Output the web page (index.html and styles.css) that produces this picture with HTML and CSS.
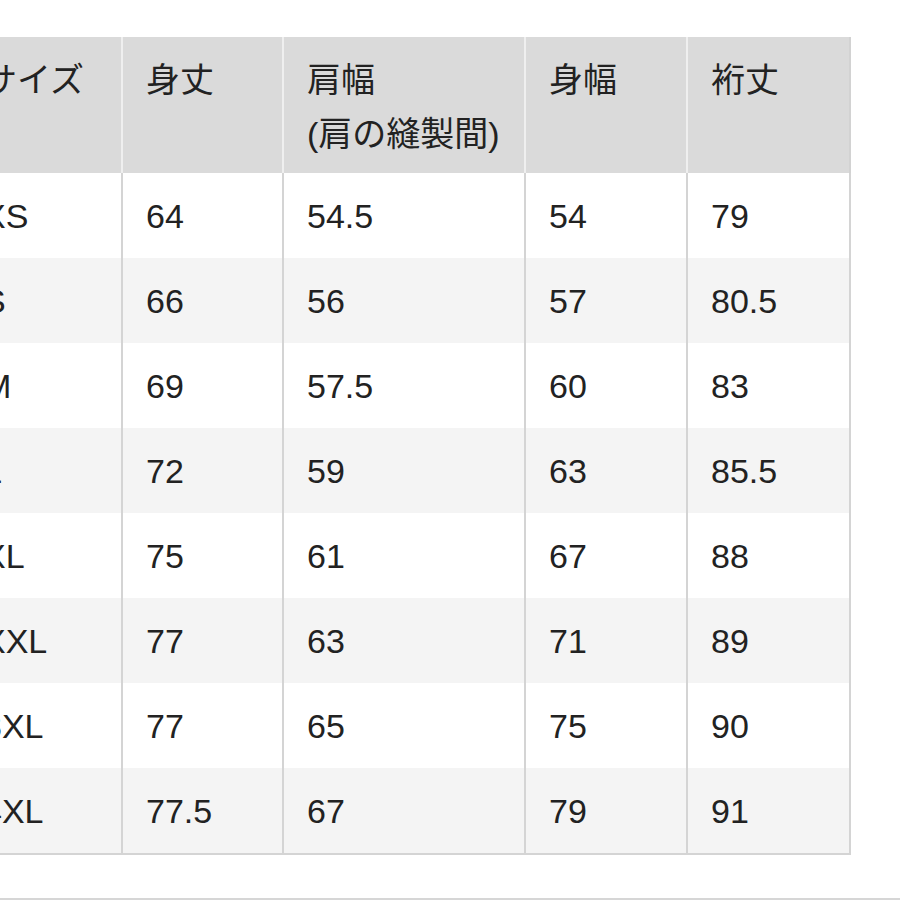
FILE: index.html
```html
<!DOCTYPE html>
<html lang="ja">
<head>
<meta charset="utf-8">
<title>サイズ表</title>
<link rel="stylesheet" href="styles.css">
</head>
<body>
<div class="page">
  <div class="sheet">
    <div class="row head">
      <div class="cell">サイズ</div>
      <div class="cell">身丈</div>
      <div class="cell">肩幅<br>(肩の縫製間)</div>
      <div class="cell">身幅</div>
      <div class="cell">裄丈</div>
    </div>
    <div class="row"><div class="cell">XS</div><div class="cell">64</div><div class="cell">54.5</div><div class="cell">54</div><div class="cell">79</div></div>
    <div class="row alt"><div class="cell">S</div><div class="cell">66</div><div class="cell">56</div><div class="cell">57</div><div class="cell">80.5</div></div>
    <div class="row"><div class="cell">M</div><div class="cell">69</div><div class="cell">57.5</div><div class="cell">60</div><div class="cell">83</div></div>
    <div class="row alt"><div class="cell">L</div><div class="cell">72</div><div class="cell">59</div><div class="cell">63</div><div class="cell">85.5</div></div>
    <div class="row"><div class="cell">XL</div><div class="cell">75</div><div class="cell">61</div><div class="cell">67</div><div class="cell">88</div></div>
    <div class="row alt"><div class="cell">XXL</div><div class="cell">77</div><div class="cell">63</div><div class="cell">71</div><div class="cell">89</div></div>
    <div class="row"><div class="cell">3XL</div><div class="cell">77</div><div class="cell">65</div><div class="cell">75</div><div class="cell">90</div></div>
    <div class="row alt"><div class="cell">4XL</div><div class="cell">77.5</div><div class="cell">67</div><div class="cell">79</div><div class="cell">91</div></div>
  </div>
  <div class="divider"></div>
</div>
</body>
</html>
```
FILE: styles.css
```css
html, body {
  margin: 0;
  padding: 0;
  background: #ffffff;
}

body {
  font-family: "Liberation Sans", "Noto Sans CJK JP", sans-serif;
  color: #222222;
  font-size: 34px;
  overflow: hidden;
}

.page {
  padding-top: 37px;
  width: 900px;
}

.sheet {
  margin-left: -40px;
  width: 891px;
  border-bottom: 2px solid #d4d4d4;
}

.row {
  display: grid;
  grid-template-columns: 163px 161px 242px 162px 163px;
  height: 85px;
  background: #ffffff;
}

.row.alt {
  background: #f4f4f4;
}

.cell {
  box-sizing: border-box;
  border-right: 2px solid #d4d4d4;
  padding-left: 23px;
  line-height: 56px;
  display: flex;
  align-items: center;
  white-space: nowrap;
}

.row.head {
  height: 136px;
  background: #dadada;
}

.row.head .cell {
  display: block;
  padding-top: 16px;
  line-height: 54px;
  border-right-color: #efefef;
}

.row.head .cell:last-child {
  border-right-color: #d2d2d2;
}

.divider {
  margin-top: 43px;
  border-top: 2px solid #d6d6d6;
}
```
